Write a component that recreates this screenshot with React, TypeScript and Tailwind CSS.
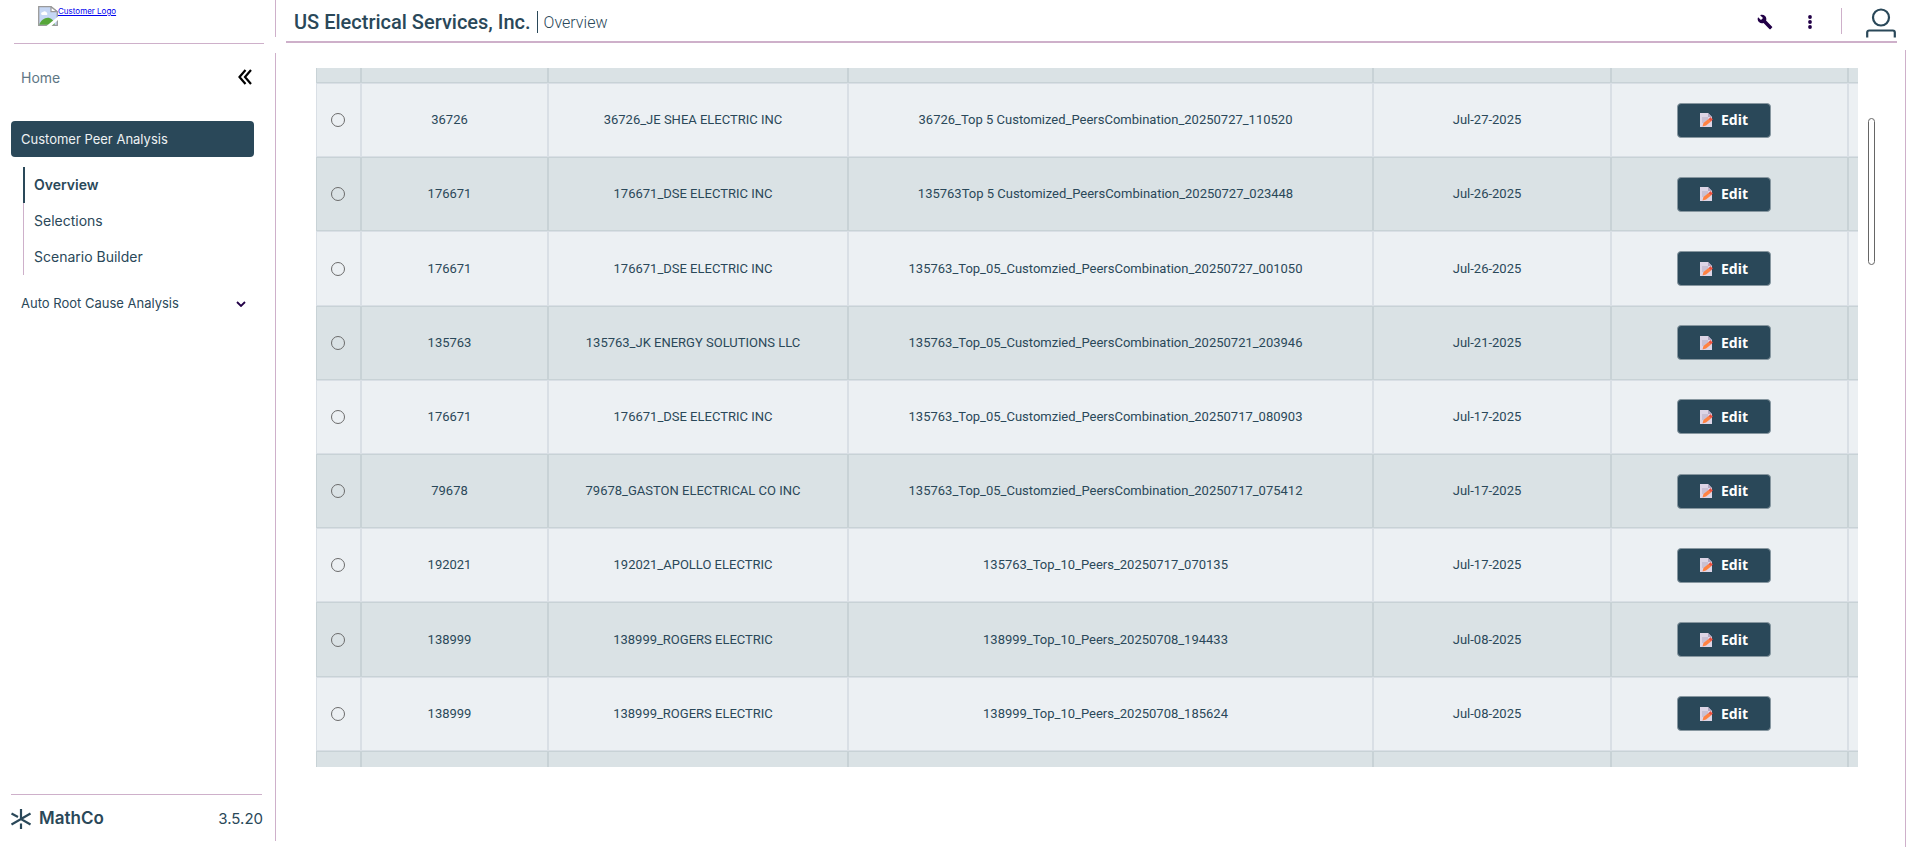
import React from "react";

type Row = { id: string; customer: string; scenario: string; date: string };

const rows: Row[] = [
  { id: "36726", customer: "36726_JE SHEA ELECTRIC INC", scenario: "36726_Top 5 Customized_PeersCombination_20250727_110520", date: "Jul-27-2025" },
  { id: "176671", customer: "176671_DSE ELECTRIC INC", scenario: "135763Top 5 Customized_PeersCombination_20250727_023448", date: "Jul-26-2025" },
  { id: "176671", customer: "176671_DSE ELECTRIC INC", scenario: "135763_Top_05_Customzied_PeersCombination_20250727_001050", date: "Jul-26-2025" },
  { id: "135763", customer: "135763_JK ENERGY SOLUTIONS LLC", scenario: "135763_Top_05_Customzied_PeersCombination_20250721_203946", date: "Jul-21-2025" },
  { id: "176671", customer: "176671_DSE ELECTRIC INC", scenario: "135763_Top_05_Customzied_PeersCombination_20250717_080903", date: "Jul-17-2025" },
  { id: "79678", customer: "79678_GASTON ELECTRICAL CO INC", scenario: "135763_Top_05_Customzied_PeersCombination_20250717_075412", date: "Jul-17-2025" },
  { id: "192021", customer: "192021_APOLLO ELECTRIC", scenario: "135763_Top_10_Peers_20250717_070135", date: "Jul-17-2025" },
  { id: "138999", customer: "138999_ROGERS ELECTRIC", scenario: "138999_Top_10_Peers_20250708_194433", date: "Jul-08-2025" },
  { id: "138999", customer: "138999_ROGERS ELECTRIC", scenario: "138999_Top_10_Peers_20250708_185624", date: "Jul-08-2025" },
];

const light = "border border-[#d9dfe5] bg-[#ecf0f3] py-0 pl-0";
const dark = "border border-[#c8d2d6] bg-[#dae2e5] py-0 pl-0";

function MemoIcon() {
  return (
    <svg viewBox="0 0 14 14" className="size-[14px]" aria-hidden="true">
      <path d="M1 0h8l4 4v10H1z" fill="#ddd5e6" />
      <path d="M9 0l4 4H9z" fill="#b3a7c2" />
      <path d="M3 5h6M3 7h8M3 9h4" stroke="#b5abc2" strokeWidth="1" />
      <path d="M3.500 13.500l1-3.500 5-4 2.500 2.500-5 4z" fill="#ff8242" />
      <path d="M9.500 6l2.500-2 .5 1.500 1.500.5-2 2.500z" fill="#f0503c" />
    </svg>
  );
}

function BrokenImageIcon() {
  return (
    <svg viewBox="0 0 20 20" className="size-5 shrink-0" aria-hidden="true">
      <path d="M.7.7H13l6.300 5V19.300H.7z" fill="#c6d7f5" stroke="#9a9a9a" strokeWidth="1.300" />
      <path d="M13 .7v5h6.300z" fill="#fff" stroke="#9a9a9a" strokeWidth="1.200" />
      <path d="M3 8a2 2 0 0 1 2-2 2.500 2.500 0 0 1 4 1 1.500 1.500 0 0 1 0 2H4z" fill="#fff" />
      <path d="M1.300 18.700c1-4 5-7 8.500-7 3 0 6 2 7 7z" fill="#57a639" />
      <path d="M8.500 20L20 10.500V14l-6.500 6z" fill="#fff" />
    </svg>
  );
}

function EdgeRow({ height }: { height: string }) {
  return (
    <tr className={height} aria-hidden="true">
      {[0, 1, 2, 3, 4, 5, 6].map((c) => (
        <td key={c} className={dark + " pr-0" + (height === "h-[15px]" ? " border-t-0" : " border-b-0") + (c === 6 ? " border-r-0" : "")} />
      ))}
    </tr>
  );
}

function Sidebar() {
  return (
    <aside className="flex w-[276px] shrink-0 flex-col">
      <div className="relative flex h-[44px] flex-col px-3.5">
        <a href="#logo" className="ml-6 mt-1.5 flex items-start text-[8px] leading-[10px] text-[#0000ee] underline">
          <BrokenImageIcon />
          <span>Customer Logo</span>
        </a>
        <div className="mr-[-2px] mt-auto h-px w-[250px] bg-[#ceb0ca]" />
        <div className="absolute right-0 top-0 h-[37px] w-px bg-[#ceb0ca]" />
      </div>
      <div className="mb-1.5 mt-[9px] flex flex-1 flex-col border-r border-[#ceb0ca] pl-[11px]">
        <div className="flex h-12 items-center justify-between pl-2.5 pr-[23px]">
          <a href="#home" className="text-[14px] text-[#5e7785]">Home</a>
          <button type="button" aria-label="Collapse menu" className="text-black">
            <svg viewBox="0 0 14 16" className="h-4 w-3.5" fill="none" stroke="currentColor" strokeWidth="2.200">
              <path d="M7.500 1L1.500 8l6 7M13 1L7 8l6 7" />
            </svg>
          </button>
        </div>
        <nav className="mt-5 flex flex-col">
          <a href="#peer" className="mr-[21px] flex h-9 items-center rounded bg-[#2a4859] px-2.5 pt-0.5 text-[13px] text-[#eef2f4]">
            Customer Peer Analysis
          </a>
          <div className="ml-3 mt-2.5 flex flex-col text-[14px] text-[#2a4859]">
            <a href="#overview" className="flex h-9 items-center border-l-2 border-[#2a4859] pb-0.5 pl-[9px] font-semibold">Overview</a>
            <a href="#selections" className="flex h-9 items-center border-l border-[#ceb0ca] pb-0.5 pl-2.5">Selections</a>
            <a href="#builder" className="flex h-9 items-center border-l border-[#ceb0ca] pb-0.5 pl-2.5">Scenario Builder</a>
          </div>
          <button type="button" className="mt-[11px] flex h-9 items-center justify-between pl-2.5 pr-[29px] text-[13px] text-[#2a4859]">
            <span>Auto Root Cause Analysis</span>
            <svg viewBox="0 0 10 6" className="h-1.5 w-2.5" fill="none" stroke="#220047" strokeWidth="1.800">
              <path d="M1 1l4 4 4-4" />
            </svg>
          </button>
        </nav>
        <div className="mb-2 mr-3 mt-auto">
          <div className="mr-px h-px bg-[#ceb0ca]" />
          <div className="mt-2.5 flex h-7 items-center text-[#2a4859]">
            <svg viewBox="0 0 20 20" className="size-5" stroke="currentColor" strokeWidth="2.200" aria-hidden="true">
              <path d="M10 0v10M10 14.500V20M.5 4.500L7 8M10 10l9.500-5.500M.5 15.500L10 10l9.500 5.500" fill="none" />
            </svg>
            <span className="ml-2 text-[17px] font-semibold">MathCo</span>
            <span className="ml-auto text-[15px]">3.5.20</span>
          </div>
        </div>
      </div>
    </aside>
  );
}

function Header() {
  return (
    <header className="ml-2.5 mr-[23px] flex h-[43px] items-center border-b-2 border-[#ceb0ca] pl-2 pt-0.5 text-[#2a4859]">
      <h1 className="font-[Roboto] text-[20px] font-medium">US Electrical Services, Inc.</h1>
      <div className="ml-1.5 h-[22px] w-px bg-[#2a4859]" />
      <span className="ml-1.5 pt-0.5 font-[Roboto] text-[16px] font-light">Overview</span>
      <div className="ml-auto flex items-center pr-px">
        <button type="button" aria-label="Settings" className="mr-[35px]">
          <svg viewBox="0 0 24 24" className="size-4" fill="#220047">
            <path d="M22.700 19l-9.100-9.100c.9-2.300.4-5-1.500-6.900-2-2-5-2.400-7.400-1.300L9 6 6 9 1.600 4.700C.4 7.100.9 10.100 2.900 12.100c1.900 1.900 4.600 2.400 6.900 1.500l9.100 9.100c.4.4 1 .4 1.400 0l2.300-2.300c.5-.4.5-1.100.1-1.400z" />
          </svg>
        </button>
        <button type="button" aria-label="More" className="mr-[29px]">
          <svg viewBox="0 0 4 14" className="h-3.5 w-1" fill="#220047">
            <circle cx="2" cy="2" r="1.900" />
            <circle cx="2" cy="7" r="1.900" />
            <circle cx="2" cy="12" r="1.900" />
          </svg>
        </button>
        <div className="mb-0.5 mr-6 h-[26px] w-px bg-[#ceb0ca]" />
        <button type="button" aria-label="Account">
          <svg viewBox="0 0 30 30" className="mt-0.5 size-[30px]" fill="none" stroke="#2a4859" strokeWidth="2.200">
            <circle cx="15" cy="9.500" r="8" />
            <path d="M1.200 29.500v-5a2 2 0 0 1 2-2h23.600a2 2 0 0 1 2 2v5" />
          </svg>
        </button>
      </div>
    </header>
  );
}

export default function App() {
  return (
    <div className="flex min-h-screen bg-white font-[Inter,sans-serif]">
      <Sidebar />
      <div className="flex min-w-0 flex-1 flex-col">
        <Header />
        <main className="mr-3.5 mt-[7px] flex flex-1 items-start border-r border-[#ceb0ca] pl-10 pt-[18px]">
          <table className="h-[699px] min-w-0 flex-1 table-fixed border-separate border-spacing-0 text-center font-[Roboto] text-[13px] leading-4 text-[#2a4859]">
            <colgroup>
              <col className="w-[45px]" />
              <col className="w-[187px]" />
              <col className="w-[300px]" />
              <col className="w-[525px]" />
              <col className="w-[238px]" />
              <col className="w-[237px]" />
              <col className="w-[10px]" />
            </colgroup>
            <tbody>
              <EdgeRow height="h-[15px]" />
              {rows.map((r, i) => {
                const cell = i % 2 === 0 ? light : dark;
                return (
                  <tr key={i} className="h-[74px]">
                    <td className={cell + " pr-0.5"}>
                      <input
                        type="radio"
                        name="scenario"
                        aria-label={"Select " + r.scenario}
                        className="mx-auto block size-3.5 appearance-none rounded-full border border-[#6b6b6b] bg-transparent checked:border-4"
                      />
                    </td>
                    <td className={cell + " pr-2.5"}>{r.id}</td>
                    <td className={cell + " pr-2.5"}>{r.customer}</td>
                    <td className={cell + " pr-2.5"}>{r.scenario}</td>
                    <td className={cell + " pr-2.5"}>{r.date}</td>
                    <td className={cell + " pr-3"}>
                      <button
                        type="button"
                        className="mx-auto flex h-[35px] w-[94px] items-center justify-center gap-2 rounded border border-[#8797a0] bg-[#2a4859] font-['Noto_Sans'] text-[14px] font-bold text-white"
                      >
                        <MemoIcon />
                        Edit
                      </button>
                    </td>
                    <td className={cell + " border-r-0 pr-0"} />
                  </tr>
                );
              })}
              <EdgeRow height="h-4" />
            </tbody>
          </table>
          <div className="ml-2.5 mr-[30px] mt-[50px] h-[147px] w-[7px] rounded-full border border-[#666666] bg-white" />
        </main>
      </div>
    </div>
  );
}
